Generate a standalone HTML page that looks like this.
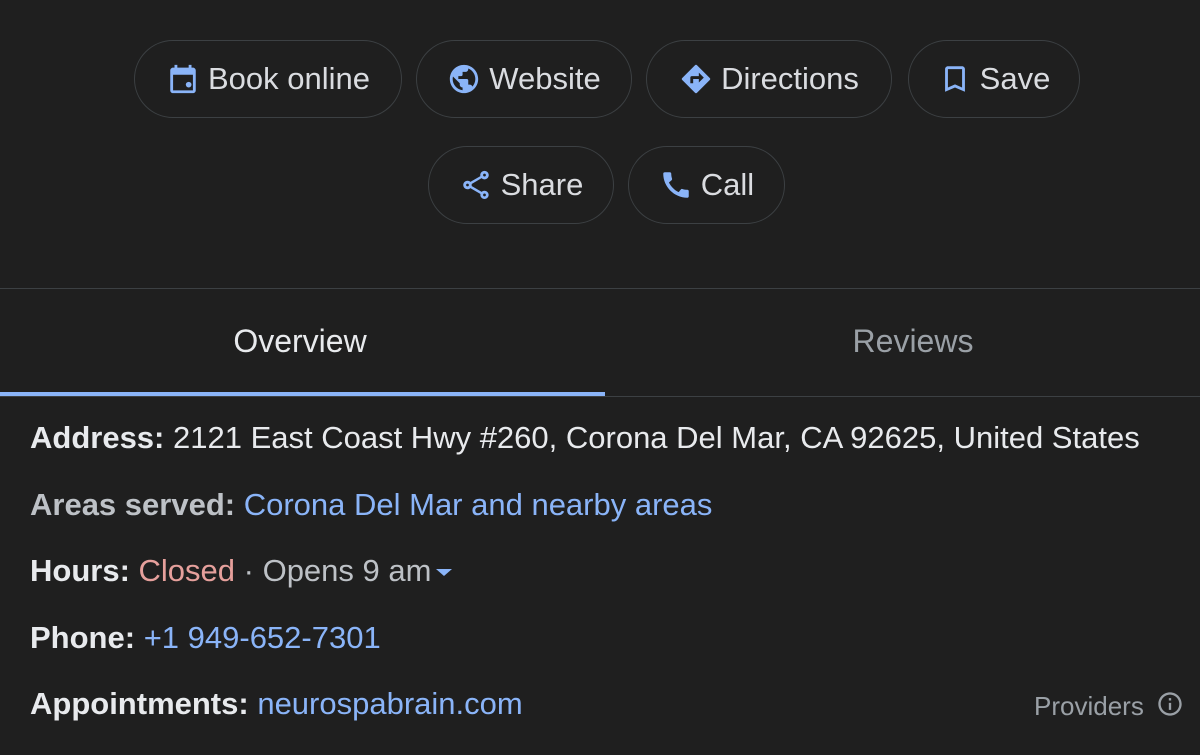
<!DOCTYPE html>
<html><head><meta charset="utf-8"><style>
body{margin:0;width:1200px;height:755px;background:#1f1f1f;font-family:"Liberation Sans",Arial,sans-serif;overflow:hidden;position:relative;color:#e8eaed}
.b{position:absolute;height:78px;border:1px solid #3c4043;border-radius:40px;box-sizing:border-box;display:flex;align-items:center;justify-content:center;font-size:31px;color:#dadce0;gap:8px}
.b svg{width:34px;height:34px;fill:#8ab4f8}
.tab{position:absolute;top:323px;font-size:32px;width:600px;text-align:center}
.r{position:absolute;left:30px;font-size:31px;white-space:nowrap}
.r b{color:#e8eaed}
.lk{color:#8ab4f8}
</style></head><body>
<div class="b" style="left:134px;top:40px;width:268px"><svg viewBox="0 0 24 24"><path d="M19 4h-1V2h-2v2H8V2H6v2H5c-1.1 0-2 .9-2 2v14c0 1.1.9 2 2 2h14c1.1 0 2-.9 2-2V6c0-1.1-.9-2-2-2zm0 16H5V9h14v11z"/><circle cx="16" cy="16" r="2"/></svg>Book online</div>
<div class="b" style="left:416px;top:40px;width:216px"><svg viewBox="0 0 24 24"><path d="M12 2C6.480 2 2 6.48 2 12s4.48 10 10 10 10-4.48 10-10S17.52 2 12 2zm-1 17.93c-3.95-.49-7-3.850-7-7.93 0-.62.08-1.21.21-1.79L9 15v1c0 1.1.9 2 2 2v1.93zm6.9-2.54c-.26-.81-1-1.39-1.9-1.39h-1v-3c0-.55-.45-1-1-1H8v-2h2c.55 0 1-.45 1-1V7h2c1.1 0 2-.9 2-2v-.41c2.93 1.19 5 4.06 5 7.41 0 2.08-.8 3.97-2.1 5.39z"/></svg>Website</div>
<div class="b" style="left:646px;top:40px;width:246px"><svg viewBox="0 0 24 24"><path d="M21.71 11.29l-9-9a1 1 0 00-1.42 0l-9 9a1 1 0 000 1.42l9 9a1 1 0 001.42 0l9-9a1 1 0 000-1.42zM14 14.5V12h-4v3H8v-4c0-.55.45-1 1-1h5V7.5l3.5 3.5-3.5 3.5z"/></svg>Directions</div>
<div class="b" style="left:908px;top:40px;width:172px"><svg viewBox="0 0 24 24"><path d="M17 3H7c-1.1 0-2 .9-2 2v16l7-3 7 3V5c0-1.1-.9-2-2-2zm0 15l-5-2.18L7 18V5h10v13z"/></svg>Save</div>
<div class="b" style="left:428px;top:146px;width:186px"><svg viewBox="0 0 24 24"><path d="M18 16.08c-.76 0-1.44.3-1.96.77L8.91 12.7c.05-.23.09-.46.09-.7s-.04-.47-.09-.7l7.05-4.11c.54.5 1.25.81 2.04.81 1.66 0 3-1.34 3-3s-1.34-3-3-3-3 1.34-3 3c0 .24.04.47.09.7L8.04 9.81C7.5 9.31 6.79 9 6 9c-1.66 0-3 1.34-3 3s1.34 3 3 3c.79 0 1.5-.31 2.04-.81l7.12 4.16c-.05.21-.08.43-.08.65 0 1.61 1.31 2.920 2.92 2.92s2.92-1.31 2.92-2.92-1.31-2.92-2.92-2.92zM18 4c.55 0 1 .45 1 1s-.45 1-1 1-1-.45-1-1 .45-1 1-1zM6 13c-.55 0-1-.45-1-1s.45-1 1-1 1 .45 1 1-.45 1-1 1zm12 7.02c-.55 0-1-.45-1-1s.45-1 1-1 1 .45 1 1-.45 1-1 1z"/></svg>Share</div>
<div class="b" style="left:628px;top:146px;width:157px"><svg viewBox="0 0 24 24"><path d="M20.01 15.38c-1.23 0-2.42-.2-3.53-.56a.977.977 0 00-1.01.24l-1.57 1.97c-2.83-1.35-5.48-3.9-6.89-6.83l1.95-1.66c.27-.28.35-.67.24-1.02-.37-1.11-.56-2.3-.56-3.53 0-.54-.45-.99-.99-.99H4.19C3.65 3 3 3.24 3 3.99 3 13.28 10.73 21 20.01 21c.71 0 .99-.63.99-1.18v-3.45c0-.54-.45-.99-.99-.99z"/></svg>Call</div>
<div style="position:absolute;left:0;top:288px;width:1200px;height:1px;background:#3c4043"></div>
<div class="tab" style="left:0;color:#e8eaed">Overview</div>
<div class="tab" style="left:613px;color:#9aa0a6">Reviews</div>
<div style="position:absolute;left:0;top:396px;width:1200px;height:1px;background:#3c4043"></div>
<div style="position:absolute;left:0;top:392px;width:605px;height:4px;background:#8ab4f8"></div>
<div class="r" style="top:420px"><b>Address:</b> 2121 East Coast Hwy #260, Corona Del Mar, CA 92625, United States</div>
<div class="r" style="top:487px"><b style="color:#bdc1c6">Areas served:</b> <span class="lk">Corona Del Mar and nearby areas</span></div>
<div class="r" style="top:553px"><b>Hours:</b> <span style="color:#e6a09c">Closed</span> <span style="color:#bdc1c6">· Opens 9 am</span><span style="display:inline-block;width:0;height:0;border-left:8px solid transparent;border-right:8px solid transparent;border-top:7px solid #8ab4f8;vertical-align:middle;margin-left:5px"></span></div>
<div class="r" style="top:620px"><b>Phone:</b> <span class="lk">+1 949-652-7301</span></div>
<div class="r" style="top:686px"><b>Appointments:</b> <span class="lk">neurospabrain.com</span></div>
<div style="position:absolute;left:1034px;top:691px;font-size:26px;color:#9aa0a6">Providers</div>
<svg style="position:absolute;left:1156px;top:690px" width="28" height="28" viewBox="0 0 24 24" fill="#9aa0a6"><path d="M11 7h2v2h-2zm0 4h2v6h-2zm1-9C6.48 2 2 6.48 2 12s4.48 10 10 10 10-4.48 10-10S17.52 2 12 2zm0 18c-4.41 0-8-3.59-8-8s3.59-8 8-8 8 3.59 8 8-3.59 8-8 8z"/></svg>
</body></html>
